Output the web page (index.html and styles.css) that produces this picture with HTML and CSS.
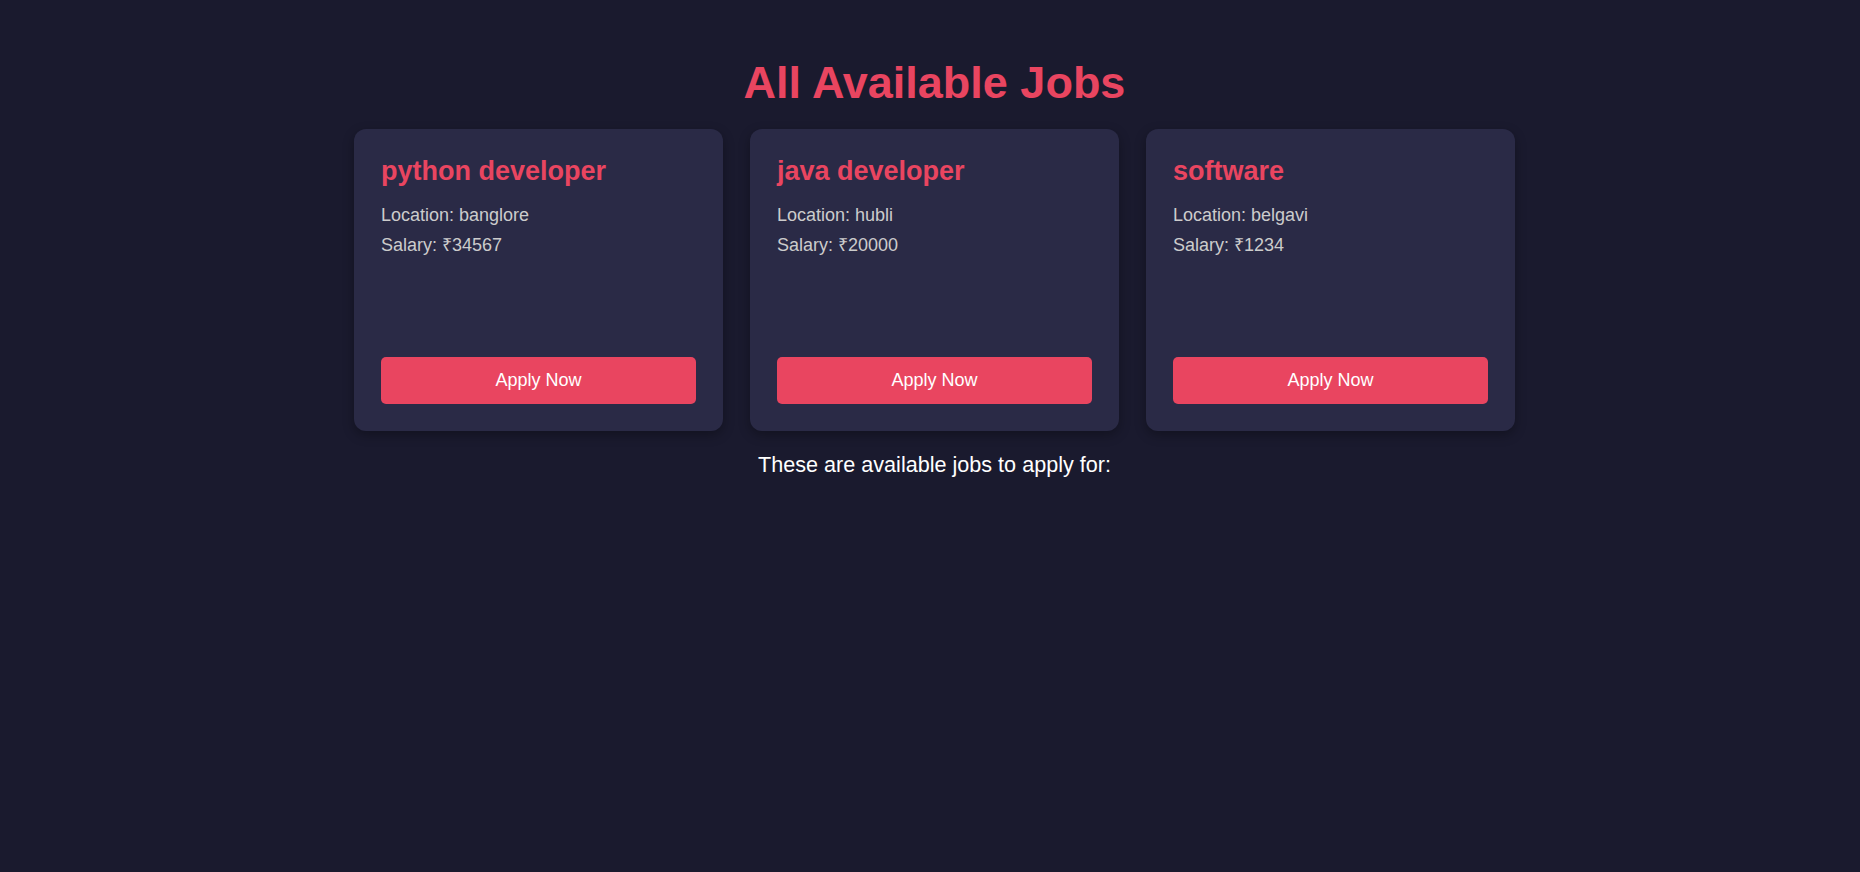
FILE: index.html
```html
<!DOCTYPE html>
<html lang="en">
<head>
<meta charset="utf-8">
<title>All Available Jobs</title>
<link rel="stylesheet" href="styles.css">
</head>
<body>
<main class="page">
  <h1 class="page-title">All Available Jobs</h1>
  <section class="jobs">
    <article class="job-card">
      <h3 class="job-title">python developer</h3>
      <p class="job-meta">Location: banglore</p>
      <p class="job-meta">Salary: ₹34567</p>
      <button class="apply-btn">Apply Now</button>
    </article>
    <article class="job-card">
      <h3 class="job-title">java developer</h3>
      <p class="job-meta">Location: hubli</p>
      <p class="job-meta">Salary: ₹20000</p>
      <button class="apply-btn">Apply Now</button>
    </article>
    <article class="job-card">
      <h3 class="job-title">software</h3>
      <p class="job-meta">Location: belgavi</p>
      <p class="job-meta">Salary: ₹1234</p>
      <button class="apply-btn">Apply Now</button>
    </article>
  </section>
  <p class="note">These are available jobs to apply for:</p>
</main>
</body>
</html>
```

FILE: styles.css
```css
html, body {
  margin: 0;
  padding: 0;
  background: #1a1a2e;
  min-height: 100%;
}

body {
  font-family: "Liberation Sans", Arial, sans-serif;
  color: #cccccc;
}

.page {
  display: flex;
  flex-direction: column;
  align-items: center;
  padding: 57px 0 0 9px;
}

.page-title {
  margin: 0 0 20px;
  font-size: 45px;
  font-weight: 700;
  line-height: 52px;
  color: #e94560;
}

.jobs {
  display: flex;
  gap: 27px;
}

.job-card {
  box-sizing: border-box;
  width: 369px;
  height: 302px;
  padding: 27px;
  background: #2a2a46;
  border-radius: 12px;
  box-shadow: 0 4px 12px rgba(0, 0, 0, 0.3);
  display: flex;
  flex-direction: column;
}

.job-title {
  margin: 0 0 18px;
  font-size: 27px;
  line-height: 31px;
  font-weight: 700;
  color: #e94560;
}

.job-meta {
  margin: 0 0 9px;
  font-size: 18px;
  line-height: 21px;
  color: #cccccc;
}

.apply-btn {
  margin-top: auto;
  height: 47px;
  width: 100%;
  border: none;
  border-radius: 5px;
  background: #e94560;
  color: #ffffff;
  font-family: "Liberation Sans", Arial, sans-serif;
  font-size: 18px;
  cursor: pointer;
}

.note {
  margin: 21px 0 0;
  font-size: 21.6px;
  line-height: 25px;
  color: #ffffff;
}
```
